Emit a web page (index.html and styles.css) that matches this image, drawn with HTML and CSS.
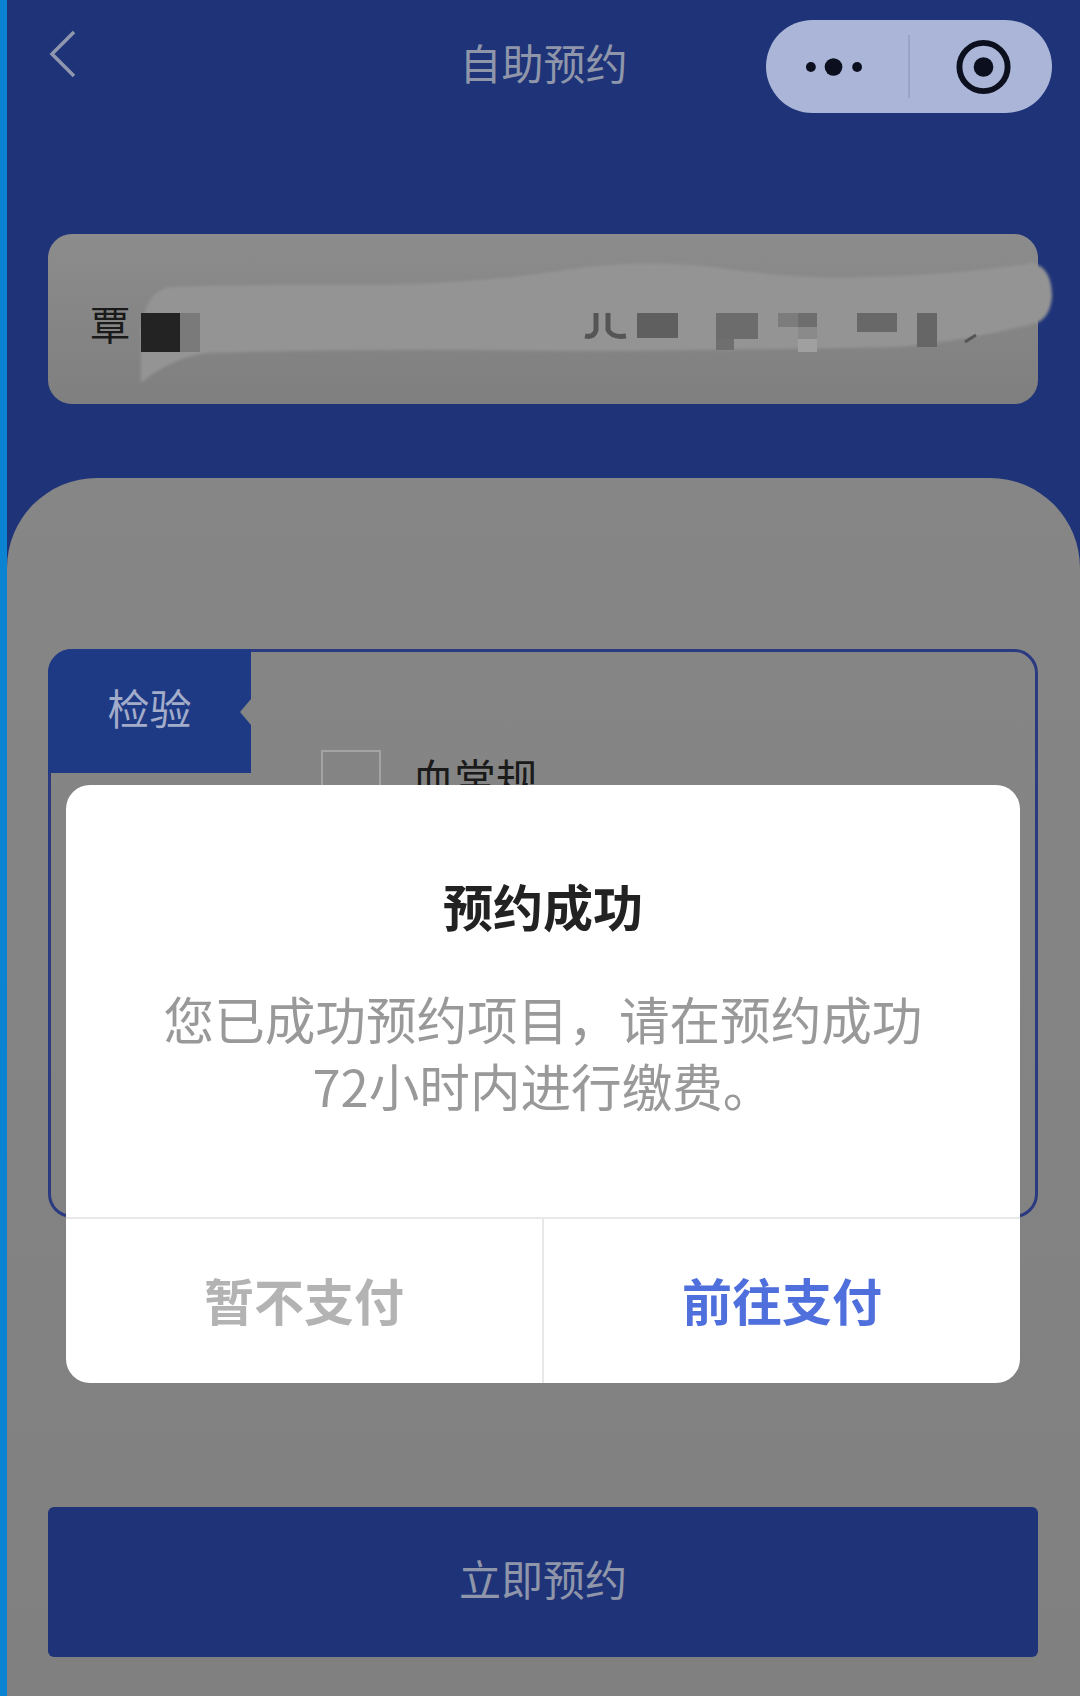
FILE: index.html
```html
<!DOCTYPE html>
<html lang="zh">

<head>
    <meta charset="UTF-8">
    <meta name="viewport" content="width=device-width, initial-scale=1.0">
    <title>自助预约</title>
    <link rel="stylesheet" href="styles.css">
</head>

<body>
    <div class="app">
        <div class="edge"></div>

        <div class="page">
            <header class="nav">
                <svg class="back" viewBox="0 0 30 48" width="30" height="48">
                    <path d="M26 2 L4 24 L26 46" fill="none" stroke="#8f98ad" stroke-width="3.5" />
                </svg>
                <h1 class="nav-title">自助预约</h1>
                <div class="capsule">
                    <svg class="capsule-more" viewBox="0 0 60 20" width="60" height="20">
                        <circle cx="6" cy="10" r="5" fill="#0b0f1e" />
                        <circle cx="29" cy="10" r="9" fill="#0b0f1e" />
                        <circle cx="53" cy="10" r="5" fill="#0b0f1e" />
                    </svg>
                    <span class="capsule-line"></span>
                    <svg class="capsule-close" viewBox="0 0 56 56" width="56" height="56">
                        <circle cx="28" cy="28" r="24.5" fill="none" stroke="#0b0f1e" stroke-width="6" />
                        <circle cx="28" cy="28" r="10" fill="#0b0f1e" />
                    </svg>
                </div>
            </header>

            <section class="patient">
                <span class="patient-name">覃</span>
                <!-- 打码涂抹区域 -->
                <svg class="smear" viewBox="0 0 1010 170" width="1010" height="170">
                    <defs>
                        <filter id="soft" x="-5%" y="-20%" width="110%" height="140%">
                            <feGaussianBlur stdDeviation="1.6" />
                        </filter>
                    </defs>
                    <g transform="translate(-48 -234)">
                        <path filter="url(#soft)" d="M141 383 L141 330 Q145 292 170 287 Q270 284 358 285 Q470 285 565 270 Q640 258 720 268 Q800 280 861 277 Q950 276 1033 263 Q1052 268 1052 297 Q1050 318 1036 323 Q960 342 895 347 Q790 349 689 350 Q590 352 482 350 Q340 349 207 353 Q170 358 141 383 Z" fill="#949494" />
                        <rect x="141" y="313" width="39" height="39" fill="#232323" />
                        <rect x="180" y="313" width="20" height="39" fill="#7a7a7a" />
                        <path d="M596 313 L596 330 Q594 338 585 336 M608 313 L608 330 Q612 338 626 336" fill="none" stroke="#555" stroke-width="5" />
                        <rect x="637" y="313" width="41" height="25" fill="#5f5f5f" />
                        <rect x="716" y="313" width="42" height="26" fill="#6c6c6c" />
                        <rect x="716" y="339" width="18" height="11" fill="#6f6f6f" />
                        <rect x="778" y="313" width="20" height="14" fill="#7c7c7c" />
                        <rect x="798" y="313" width="19" height="14" fill="#6e6e6e" />
                        <rect x="798" y="327" width="19" height="12" fill="#8a8a8a" />
                        <rect x="798" y="339" width="19" height="13" fill="#a0a0a0" />
                        <rect x="857" y="313" width="40" height="19" fill="#686868" />
                        <rect x="917" y="313" width="20" height="34" fill="#666" />
                        <path d="M965 342 L976 335" stroke="#555" stroke-width="3" />
                    </g>
                </svg>
            </section>

            <main class="panel">
                <div class="group">
                    <div class="group-tab">检验</div>
                    <div class="group-item">
                        <span class="check"></span>
                        <span class="item-name">血常规</span>
                    </div>
                </div>
                <button class="submit">立即预约</button>
            </main>
        </div>

        <div class="dialog">
            <h2 class="dialog-title">预约成功</h2>
            <p class="dialog-text">您已成功预约项目，请在预约成功<br>72小时内进行缴费。</p>
            <div class="dialog-actions">
                <button class="action action-later">暂不支付</button>
                <button class="action action-pay">前往支付</button>
            </div>
        </div>
    </div>
</body>

</html>
```

FILE: styles.css
```css
:root {
    --navy: #1f3478;
    --tab: #1f3a85;
    --mask: #858585;
    --muted: #8f96aa;
}

* {
    box-sizing: border-box;
}

body {
    margin: 0;
    font-family: "Noto Sans CJK SC", "Noto Sans", sans-serif;
}

.app {
    position: relative;
    display: flex;
    width: 1080px;
    height: 1696px;
    overflow: hidden;
    background: var(--navy);
}

.edge {
    width: 7px;
    background: #0a84d2;
}

.page {
    flex: 1;
    display: flex;
    flex-direction: column;
}

.nav {
    display: grid;
    grid-template-columns: 1fr auto 1fr;
    align-items: center;
    height: 234px;
    padding: 20px 28px 121px;
}

.back {
    margin: -26px 0 0 13px;
}

.nav-title {
    margin: -10px 0 0;
    font-size: 42px;
    font-weight: 400;
    color: var(--muted);
}

.capsule {
    justify-self: end;
    display: flex;
    align-items: center;
    width: 286px;
    height: 93px;
    padding: 0 41px 0 39px;
    border-radius: 47px;
    background: #aab5d8;
}

.capsule-line {
    width: 2px;
    height: 63px;
    margin: 0 46px 0 44px;
    background: #98a3c6;
}

.patient {
    position: relative;
    display: flex;
    align-items: center;
    height: 170px;
    margin: 0 42px 0 41px;
    padding: 8px 0 0 42px;
    border-radius: 24px;
    background: linear-gradient(#8c8c8c, #7f7f7f);
}

.patient-name {
    font-size: 40px;
    color: #1a1a1a;
}

.smear {
    position: absolute;
    left: 0;
    top: 0;
    overflow: visible;
}

.panel {
    flex: 1;
    margin-top: 74px;
    padding: 171px 42px 0 41px;
    border-radius: 90px 90px 0 0;
    background: linear-gradient(#868686, #808080);
}

.group {
    display: flex;
    height: 569px;
    border: 3px solid #2b3a80;
    border-radius: 24px;
}

.group-tab {
    position: relative;
    width: 203px;
    height: 124px;
    margin: -3px 0 0 -3px;
    border-radius: 24px 0 0 0;
    background: var(--tab);
    color: #a3adc9;
    font-size: 42px;
    line-height: 116px;
    text-align: center;
}

.group-tab::after {
    content: "";
    position: absolute;
    right: 0;
    top: 50px;
    width: 11px;
    height: 26px;
    background: var(--mask);
    clip-path: polygon(100% 0, 0 50%, 100% 100%);
}

.group-item {
    display: flex;
    align-items: center;
    gap: 31px;
    height: 60px;
    margin: 98px 0 0 70px;
}

.check {
    width: 60px;
    height: 60px;
    border: 2px solid #a3a3a3;
}

.item-name {
    margin-top: -8px;
    font-size: 42px;
    color: #1a1a1a;
}

.submit {
    display: block;
    width: 100%;
    height: 150px;
    margin-top: 289px;
    padding-bottom: 10px;
    border: 0;
    border-radius: 6px;
    background: var(--navy);
    color: var(--muted);
    font-family: inherit;
    font-size: 42px;
}

.dialog {
    position: absolute;
    left: 66px;
    top: 785px;
    display: flex;
    flex-direction: column;
    width: 954px;
    height: 598px;
    padding-top: 86px;
    border-radius: 24px;
    background: #fff;
    text-align: center;
}

.dialog-title {
    margin: 0;
    font-size: 50px;
    font-weight: 600;
    line-height: 68px;
    color: #222;
}

.dialog-text {
    margin: 46px 0 0;
    font-size: 50.6px;
    line-height: 67px;
    color: #999;
}

.dialog-actions {
    display: flex;
    height: 166px;
    margin-top: auto;
    border-top: 2px solid #e8e8e8;
}

.action {
    flex: 1;
    padding-bottom: 6px;
    border: 0;
    background: none;
    font-family: inherit;
    font-size: 50px;
    font-weight: 600;
}

.action-later {
    border-right: 2px solid #e8e8e8;
    color: #b3b3b3;
}

.action-pay {
    color: #4f6fdc;
}
```
